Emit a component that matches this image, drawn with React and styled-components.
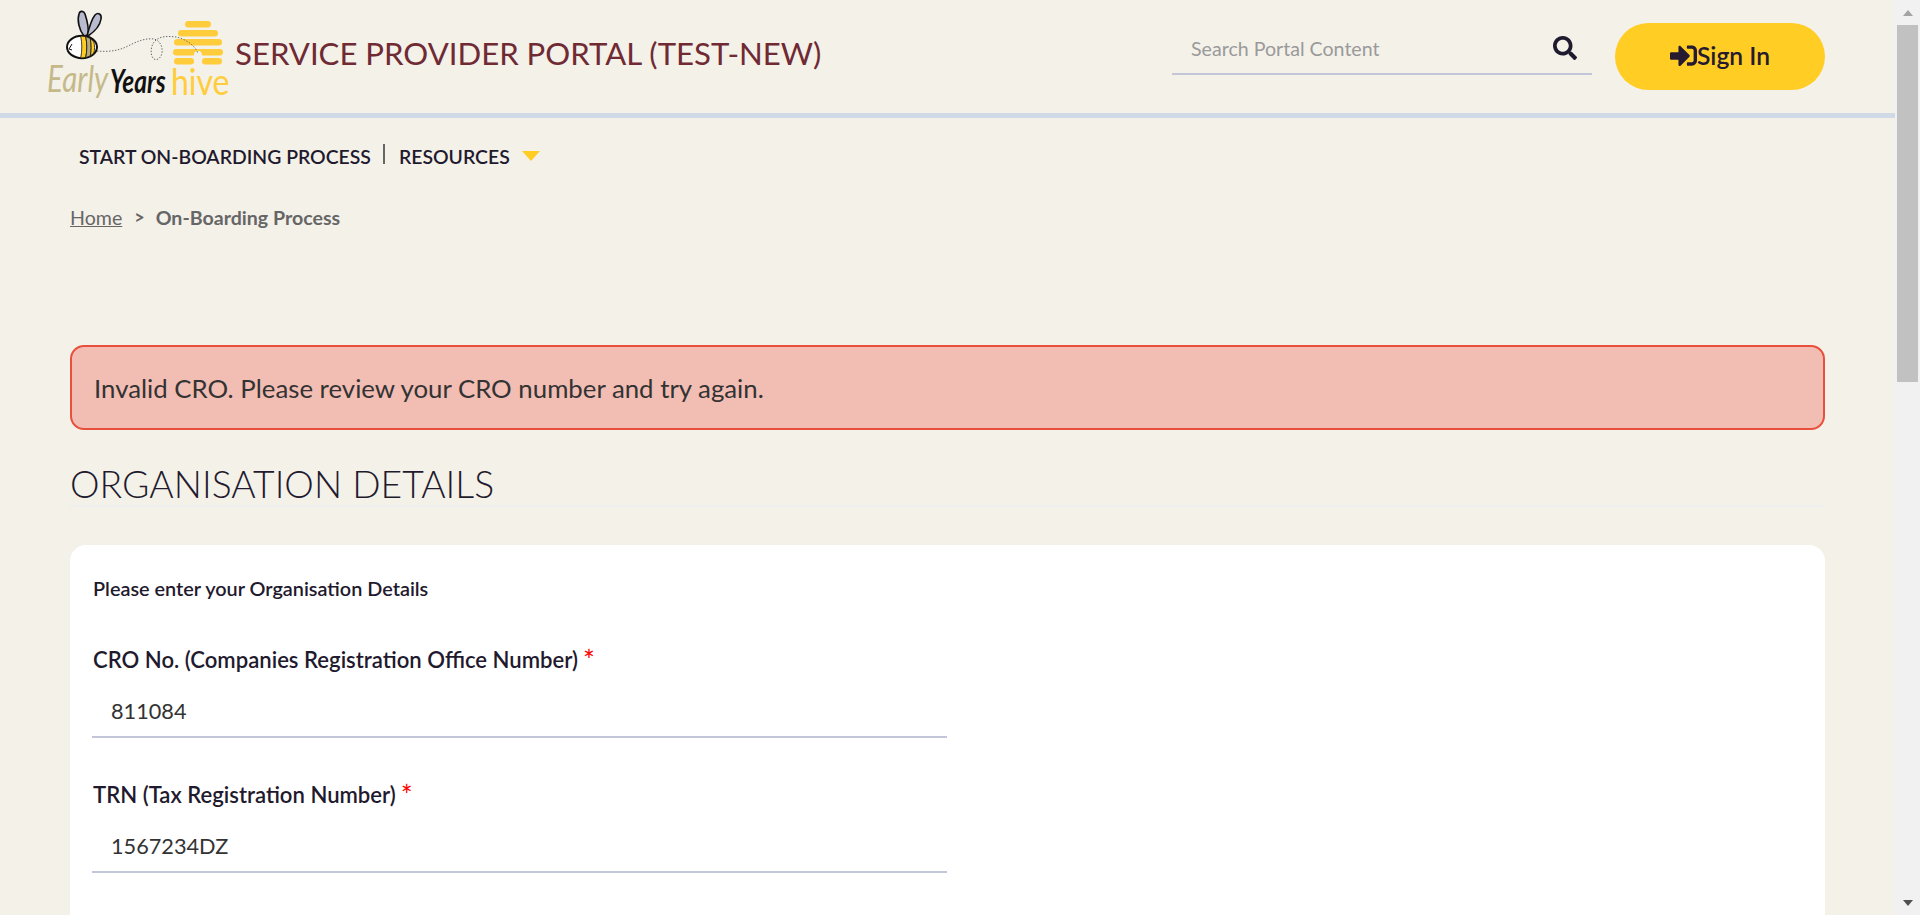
import React from 'react'
import styled, { createGlobalStyle } from 'styled-components';
import { FaSearch, FaSignInAlt } from 'react-icons/fa';

const GlobalStyle = createGlobalStyle`
  html, body {
    margin: 0;
    padding: 0;
    height: 100%;
    overflow: hidden;
    background: #f4f1e9;
    font-family: Lato, "Liberation Sans", sans-serif;
  }
  * { box-sizing: border-box; }
`;

const Shell = styled.div`
  display: flex;
  height: 915px;
  overflow: hidden;
`;

const Page = styled.div`
  flex: 1;
  min-width: 0;
  background: #f4f1e9;
  overflow: hidden;
`;

/* window scrollbar from the screenshot */
const Rail = styled.div`
  width: 25px;
  flex: none;
  background: #f1f1f1;
  display: flex;
  flex-direction: column;
  align-items: center;
  position: relative;
`;

const RailArrow = styled.div`
  width: 0;
  height: 0;
  border-left: 5.5px solid transparent;
  border-right: 5.5px solid transparent;
  ${({ $down }) => $down
    ? 'border-top: 6px solid #505050; margin-top: auto; margin-bottom: 9px;'
    : 'border-bottom: 6px solid #a3a3a3; margin-top: 10px;'}
`;

const RailThumb = styled.div`
  width: 21px;
  height: 357px;
  margin-top: 9px;
  background: #c1c1c1;
`;

const Header = styled.header`
  height: 118px;
  border-bottom: 5px solid #d0dae6;
  display: flex;
  align-items: flex-start;
  padding-left: 40px;
`;

const Logo = styled.svg`
  display: block;
  width: 200px;
  height: 100px;
  margin-top: 5px;
  flex: none;
`;

const LogoWord = styled.text`
  font-family: Lato, sans-serif;
  font-size: ${({ $size }) => $size}px;
  font-style: ${({ $italic }) => ($italic ? 'italic' : 'normal')};
  font-weight: ${({ $weight }) => $weight};
  fill: ${({ $color }) => $color};
`;

const Title = styled.div`
  margin: 33px 0 0 -5px;
  font-size: 31.15px;
  line-height: 40px;
  color: #6f2a33;
  white-space: nowrap;
`;

const SearchBox = styled.div`
  margin: 23px 0 0 auto;
  width: 420px;
  height: 52px;
  border-bottom: 2px solid #c3c6d8;
  display: flex;
  align-items: center;
  padding: 0 15px 0 17px;
  color: #1f1a2e;
  font-size: 24px;
`;

const SearchInput = styled.input`
  flex: 1;
  min-width: 0;
  border: 0;
  outline: 0;
  background: transparent;
  font: 400 19.6px Lato, sans-serif;
  color: #333;
  &::placeholder { color: #9a9a9a; opacity: 1; }
`;

const SignIn = styled.button`
  margin: 23px 70px 0 23px;
  width: 210px;
  height: 67px;
  flex: none;
  border: 0;
  border-radius: 34px;
  padding: 0 0 2px;
  background: #ffcd24;
  color: #241b30;
  font: 600 24.6px Lato, sans-serif;
  display: flex;
  align-items: center;
  justify-content: center;
  svg { font-size: 27px; }
`;

const Nav = styled.nav`
  display: flex;
  align-items: center;
  height: 34px;
  margin-top: 21px;
  padding-left: 79px;
  font-size: 19.4px;
  font-weight: 600;
  color: #1f1a2e;
`;

const NavLink = styled.a`
  white-space: nowrap;
`;

const NavDivider = styled.span`
  width: 2px;
  height: 20px;
  margin: -5px 14px 0 12px;
  background: #666;
`;

const Caret = styled.span`
  width: 0;
  height: 0;
  margin-left: 12px;
  border-left: 9.5px solid transparent;
  border-right: 9.5px solid transparent;
  border-top: 10px solid #ffcd24;
`;

const Crumbs = styled.div`
  display: flex;
  align-items: center;
  margin: 27px 0 0 70px;
  height: 34px;
  font-size: 19.6px;
  color: #666;
`;

const CrumbLink = styled.a`
  text-decoration: underline;
`;

const CrumbSep = styled.span`
  margin: 0 11px 0 12px;
  font-size: 18px;
  font-weight: 700;
`;

const CrumbCurrent = styled.span`
  font-weight: 700;
`;

const Main = styled.main`
  margin: 111px 70px 0;
`;

const Alert = styled.div`
  height: 85px;
  border: 2px solid #e94f3d;
  border-radius: 14px;
  background: #f2bdb3;
  display: flex;
  align-items: center;
  padding-left: 22px;
  font-size: 25.8px;
  color: #333;
`;

const Heading = styled.h2`
  margin: 34px 0 0;
  height: 43px;
  border-bottom: 2px solid #eeeef0;
  font-size: 37.3px;
  line-height: 40px;
  font-weight: 300;
  color: #1f1a2e;
`;

const Card = styled.section`
  margin-top: 38px;
  background: #fff;
  border-radius: 16px;
  padding: 30px 22px 40px;
  height: 500px;
`;

const Intro = styled.p`
  margin: 0 0 44px 1px;
  font-size: 19.85px;
  line-height: 26px;
  font-weight: 600;
  color: #1f1a2e;
`;

const Field = styled.div`
  width: 855px;
  margin-bottom: 42px;
`;

const Label = styled.label`
  display: block;
  padding-left: 1px;
  font-size: 22.1px;
  line-height: 30px;
  font-weight: 600;
  color: #1f1a2e;
`;

const Required = styled.span`
  color: #f00;
  margin-left: 5px;
  font-size: 28px;
  font-weight: 400;
  line-height: 0;
  vertical-align: -3px;
`;

const Value = styled.input`
  display: block;
  width: 100%;
  height: 53px;
  margin-top: 10px;
  border: 0;
  border-bottom: 2px solid #c3c6d8;
  outline: 0;
  background: transparent;
  padding: 0 19px;
  font: 400 21.7px Lato, sans-serif;
  color: #333;
`;

const hiveBars = [
  [185, 21, 26], [178, 30, 40], [174, 39, 48], [173, 49, 50], [174, 58, 20], [202, 58, 20],
];

const LogoMark = () => (
  <Logo viewBox="40 5 200 100" aria-label="Early Years hive">
    {hiveBars.map(([x, y, w]) => (
      <rect key={`${x}-${y}`} x={x} y={y} width={w} height={6.5} rx={3.2} fill="#ffcd3c" />
    ))}
    <path d="M194 58v-3a4 4 0 0 1 8 0v3h0v7h-8z" fill="#f4f1e9" />
    <path d="M97 51c12 1 22 0 33-6 8-4 16-7 24-6 5 1 9 7 8 14-1 5-5 8-8 6-4-3-4-13 1-18 5-5 13-5 21-4 10 2 20 9 22 17" fill="none" stroke="#666" strokeWidth="1" strokeDasharray="1.4 1.6" />
    <path d="M84 36C79 30 77 20 79 14 80 10 84 11 85 14 87 20 89 28 88 35Z" fill="#b9bccf" stroke="#111" strokeWidth="1.6" strokeLinejoin="round" />
    <path d="M87 36C89 28 91 20 95 15 98 12 102 14 101 19 100 26 94 32 88 36Z" fill="#b9bccf" stroke="#111" strokeWidth="1.6" strokeLinejoin="round" />
    <ellipse cx="82" cy="47" rx="15" ry="11.2" fill="#fff" stroke="#111" strokeWidth="2" />
    <path d="M80.7 36c1.5 7 1.5 15 0 22l5-.4c1.5-7 1.5-14 0-21z" fill="#ffcd24" stroke="#111" strokeWidth=".8" />
    <path d="M85.7 36.6c1.5 7 1.5 14 0 21l4.6-1.6c1.2-5 1.2-12 0-17.6z" fill="#b8ac7c" stroke="#111" strokeWidth=".8" />
    <path d="M90.3 38.4c1.2 5.6 1.2 12.6 0 17.6l3.5-3c1-3 1-8 0-11z" fill="#ffcd24" stroke="#111" strokeWidth=".8" />
    <path d="M72 44l-3 5 3 1" fill="none" stroke="#111" strokeWidth="1" />
    <LogoWord transform="translate(47 92) scale(1 1.25)" $size={29.5} $italic $weight={400} $color="#c5b98a">Early</LogoWord>
    <LogoWord transform="translate(110 93) scale(1 1.35)" $size={24.5} $italic $weight={700} $color="#111">Years</LogoWord>
    <LogoWord transform="translate(171 95) scale(1 1.17)" $size={32} $weight={400} $color="#ffcd3c">hive</LogoWord>
  </Logo>
);

const App = () => {
  return (
    <>
      <GlobalStyle />
      <Shell>
        <Page>
          <Header>
            <LogoMark />
            <Title>SERVICE PROVIDER PORTAL (TEST-NEW)</Title>
            <SearchBox>
              <SearchInput placeholder="Search Portal Content" />
              <FaSearch />
            </SearchBox>
            <SignIn>
              <FaSignInAlt />
              Sign In
            </SignIn>
          </Header>
          <Nav>
            <NavLink>START ON-BOARDING PROCESS</NavLink>
            <NavDivider />
            <NavLink>RESOURCES</NavLink>
            <Caret />
          </Nav>
          <Crumbs>
            <CrumbLink>Home</CrumbLink>
            <CrumbSep>&gt;</CrumbSep>
            <CrumbCurrent>On-Boarding Process</CrumbCurrent>
          </Crumbs>
          <Main>
            <Alert>Invalid CRO. Please review your CRO number and try again.</Alert>
            <Heading>ORGANISATION DETAILS</Heading>
            <Card>
              <Intro>Please enter your Organisation Details</Intro>
              <Field>
                <Label>CRO No. (Companies Registration Office Number)<Required>*</Required></Label>
                <Value defaultValue="811084" />
              </Field>
              <Field>
                <Label>TRN (Tax Registration Number)<Required>*</Required></Label>
                <Value defaultValue="1567234DZ" />
              </Field>
            </Card>
          </Main>
        </Page>
        <Rail>
          <RailArrow />
          <RailThumb />
          <RailArrow $down />
        </Rail>
      </Shell>
    </>
  )
}

export default App;
